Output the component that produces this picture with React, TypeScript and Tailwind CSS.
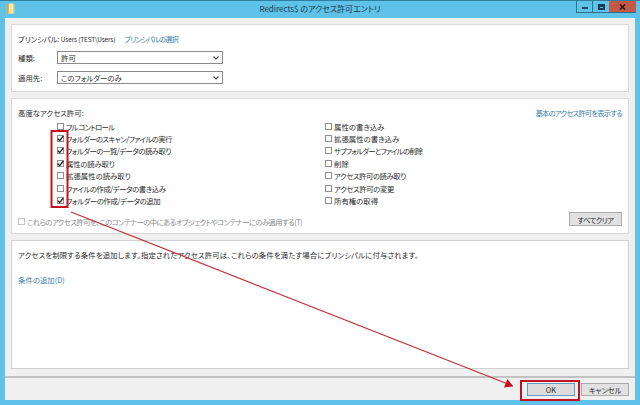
import React from "react";

const leftPerms = [
  { label: "フル コントロール", checked: false, tight: "tracking-[-0.8px]" },
  { label: "フォルダーのスキャン/ファイルの実行", checked: true, tight: "tracking-[-0.6px]" },
  { label: "フォルダーの一覧/データの読み取り", checked: true, tight: "tracking-[-0.5px]" },
  { label: "属性の読み取り", checked: true, tight: "tracking-[-0.2px]" },
  { label: "拡張属性の読み取り", checked: false, tight: "" },
  { label: "ファイルの作成/データの書き込み", checked: false, tight: "tracking-[-0.45px]" },
  { label: "フォルダーの作成/データの追加", checked: true, tight: "tracking-[-0.4px]" },
];

const rightPerms = [
  { label: "属性の書き込み", tight: "" },
  { label: "拡張属性の書き込み", tight: "" },
  { label: "サブフォルダーとファイルの削除", tight: "tracking-[-0.8px]" },
  { label: "削除", tight: "" },
  { label: "アクセス許可の読み取り", tight: "tracking-[-0.45px]" },
  { label: "アクセス許可の変更", tight: "tracking-[-0.4px]" },
  { label: "所有権の取得", tight: "" },
];

const CheckBox = ({ checked = false, disabled = false }: { checked?: boolean; disabled?: boolean }) => (
  <span
    className={`flex h-[7px] w-[7px] shrink-0 items-center justify-center border bg-white ${
      disabled ? "border-[#c4c4c4]" : "border-[#8e8e8e]"
    }`}
  >
    {checked && (
      <svg width="7" height="7" viewBox="0 0 7 7" className="shrink-0" fill="none">
        <path d="M0.8 3.6 L2.7 5.6 L6.2 1.2" stroke="#111" strokeWidth="1.3" />
      </svg>
    )}
  </span>
);

const PermRow = ({ label, checked, tight }: { label: string; checked?: boolean; tight: string }) => (
  <div className="flex h-[12.4px] items-center gap-[2px] whitespace-nowrap">
    <CheckBox checked={checked} />
    <span className={tight}>{label}</span>
  </div>
);

const SelectBox = ({ value }: { value: string }) => (
  <div className="flex h-[13px] w-[166px] items-center justify-between border border-[#8a8a8a] bg-white pl-[3px] pr-[3px]">
    <span>{value}</span>
    <svg width="6" height="4" viewBox="0 0 6 4" fill="none">
      <path d="M0.5 0.5 L3 3 L5.5 0.5" stroke="#444" strokeWidth="1.1" />
    </svg>
  </div>
);

export default function App() {
  return (
    <div
      className="relative flex h-[405px] w-[640px] flex-col overflow-hidden border-t border-[#2f7f9c] bg-[#5fc2e8] text-[7.4px] text-[#2a2a2a] [font-feature-settings:'palt']"
      style={{ fontFamily: '"Noto Sans CJK JP", "Noto Sans", sans-serif' }}
    >
      {/* title bar */}
      <div className="relative flex h-[17px] shrink-0 items-center justify-center pb-[1px] text-[8px] text-[#1d3a48]">
        <svg className="absolute left-[6px] top-[2px]" width="9" height="11" viewBox="0 0 9 11">
          <rect x="0.5" y="1" width="8" height="9.5" fill="#e9cf7c" />
          <rect x="3" y="0.5" width="4" height="10" fill="#f7e9b0" />
          <rect x="0.5" y="1" width="2" height="9.5" fill="#c9a64e" />
        </svg>
        <span>Redirects$ のアクセス許可エントリ</span>
        <div className="absolute right-[4px] top-0 flex h-[12px] border-b border-l border-[#2f6f88]">
          <div className="flex w-[16px] items-end justify-center border-r border-[#2f6f88] pb-[3px]">
            <span className="h-[2px] w-[6px] bg-[#1d4a66]" />
          </div>
          <div className="flex w-[16px] items-center justify-center">
            <span className="h-[6px] w-[7px] border-2 border-t-[3px] border-[#173a52]" />
          </div>
          <div className="flex w-[27px] items-center justify-center bg-[#c4594a]">
            <svg width="7" height="6" viewBox="0 0 7 6" fill="none">
              <path d="M1 0.5 L6 5.5 M6 0.5 L1 5.5" stroke="#2a1a18" strokeWidth="1.6" />
            </svg>
          </div>
        </div>
      </div>

      {/* client area */}
      <div className="mx-[5px] flex min-h-0 flex-1 flex-col bg-[#f0f0f0]">
        <div className="flex flex-1 flex-col gap-[6px] px-[6px] pb-[7px] pt-[6px]">
          {/* principal panel */}
          <div className="flex h-[68px] shrink-0 flex-col border border-[#d8d8d8] bg-white pl-[6px] pt-[9px]">
            <div className="flex h-[10px] items-center gap-[9px] whitespace-nowrap">
              <span className="tracking-[-0.1px]">
                プリンシパル: <span className="text-[6.4px]">Users (TEST\Users)</span>
              </span>
              <span className="tracking-[-0.9px] text-[#3d7fa8]">プリンシパルの選択</span>
            </div>
            <div className="mt-[7px] flex items-center">
              <span className="w-[39px]">種類:</span>
              <SelectBox value="許可" />
            </div>
            <div className="mt-[7px] flex items-center">
              <span className="w-[39px]">適用先:</span>
              <SelectBox value="このフォルダーのみ" />
            </div>
          </div>

          {/* permissions panel */}
          <div className="flex h-[136px] shrink-0 flex-col border border-[#d8d8d8] bg-white px-[6px] pt-[9px]">
            <div className="flex h-[10px] items-center justify-between whitespace-nowrap">
              <span>高度なアクセス許可:</span>
              <span className="tracking-[-0.85px] text-[#3d7fa8]">基本のアクセス許可を表示する</span>
            </div>
            <div className="mt-[2px] grid grid-cols-[268px_1fr] pl-[39px]">
              <div className="flex flex-col">
                {leftPerms.map((p) => (
                  <PermRow key={p.label} label={p.label} checked={p.checked} tight={p.tight} />
                ))}
              </div>
              <div className="flex flex-col">
                {rightPerms.map((p) => (
                  <PermRow key={p.label} label={p.label} tight={p.tight} />
                ))}
              </div>
            </div>
            <div className="mt-[5px] flex items-center justify-between">
              <div className="flex items-center gap-[2px] whitespace-nowrap pt-[4px] text-[#8a8a8a]">
                <CheckBox disabled />
                <span className="tracking-[-0.6px]">これらのアクセス許可を、このコンテナーの中にあるオブジェクトやコンテナーにのみ適用する(T)</span>
              </div>
              <button className="h-[14px] w-[53px] border border-[#ababab] bg-[#e1e1e1] tracking-[-0.6px] text-[#2a2a2a]">すべてクリア</button>
            </div>
          </div>

          {/* condition panel */}
          <div className="flex min-h-0 flex-1 flex-col border border-[#d0d0d0] bg-white pl-[6px] pt-[9px]">
            <div className="flex h-[10px] items-center whitespace-nowrap tracking-[0.12px]">
              アクセスを制限する条件を追加します。指定されたアクセス許可は、これらの条件を満たす場合にプリンシパルに付与されます。
            </div>
            <div className="mt-[14px] text-[#3d7fa8]">条件の追加(D)</div>
          </div>
        </div>

        {/* footer */}
        <div className="flex h-[24px] shrink-0 items-center justify-end gap-[6px] border-t-2 border-[#c2c2c2] pr-[6px]">
          <button className="h-[13px] w-[48px] border border-[#5f9fc4] bg-[#dcdcdc]">OK</button>
          <button className="h-[13px] w-[48px] border border-[#ababab] bg-[#e1e1e1] tracking-[-0.2px]">キャンセル</button>
        </div>
      </div>
      <div className="h-[5px] shrink-0" />

      {/* red annotations */}
      <svg className="pointer-events-none absolute left-0 top-[-1px]" width="640" height="405" viewBox="0 0 640 405" fill="none">
        <rect x="51.5" y="131" width="16" height="76" stroke="#c5121f" strokeWidth="2" />
        <rect x="521" y="381" width="58" height="19" stroke="#c5121f" strokeWidth="2" />
        <path d="M71 212 L508 384" stroke="#c0303a" strokeWidth="1.2" />
        <path d="M513.5 386.5 L504 387.5 L507.5 379 Z" fill="#c5121f" />
      </svg>
    </div>
  );
}
